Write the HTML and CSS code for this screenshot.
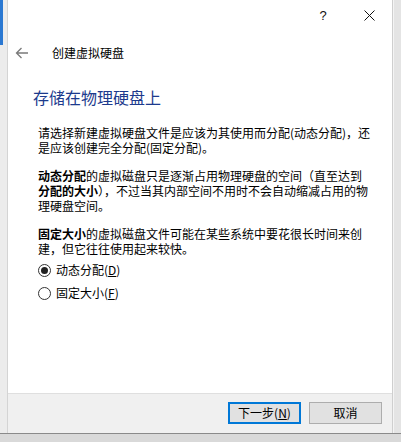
FILE: index.html
```html
<!DOCTYPE html>
<html lang="zh-CN">
<head>
<meta charset="utf-8">
<title>创建虚拟硬盘</title>
<link rel="stylesheet" href="styles.css">
</head>
<body>
<div class="screen">
  <div class="left-strip"><div class="blue-bar"></div></div>
  <div class="dialog">
    <div class="titlebar">
      <div class="cap-btn help">?</div>
      <div class="cap-btn close">
        <svg width="11" height="11" viewBox="0 0 11 11"><path d="M0.5 0.5 L10.5 10.5 M10.5 0.5 L0.5 10.5" stroke="#111" stroke-width="1" fill="none"/></svg>
      </div>
    </div>
    <div class="header">
      <svg class="back" width="14" height="12" viewBox="0 0 14 12"><path d="M13 6 H1.5 M6.5 1 L1.5 6 L6.5 11" stroke="#7a7a7a" stroke-width="1.3" fill="none"/></svg>
      <span class="header-title">创建虚拟硬盘</span>
    </div>
    <div class="content">
      <h1 class="instruction">存储在物理硬盘上</h1>
      <div class="body-text">
        <p>请选择新建虚拟硬盘文件是应该为其使用而分配(动态分配)，还<br>是应该创建完全分配(固定分配)。</p>
        <p><b>动态分配</b>的虚拟磁盘只是逐渐占用物理硬盘的空间（直至达到<br><b>分配的大小</b>），不过当其内部空间不用时不会自动缩减占用的物<br>理硬盘空间。</p>
        <p><b>固定大小</b>的虚拟磁盘文件可能在某些系统中要花很长时间来创<br>建，但它往往使用起来较快。</p>
      </div>
      <div class="radios">
        <label class="radio"><span class="circle checked"></span><span>动态分配(<u>D</u>)</span></label>
        <label class="radio"><span class="circle"></span><span>固定大小(<u>F</u>)</span></label>
      </div>
    </div>
    <div class="footer">
      <div class="btn primary">下一步(<u>N</u>)</div>
      <div class="btn">取消</div>
    </div>
  </div>
  <div class="right-strip"></div>
</div>
<div class="bottom-strip"></div>
</body>
</html>
```
FILE: styles.css
```css
html, body {
  margin: 0;
  padding: 0;
}
body {
  width: 401px;
  height: 442px;
  overflow: hidden;
  background: #f0f0f0;
  font-family: "Noto Sans CJK SC", "Noto Sans", sans-serif;
  font-size: 12px;
  color: #000;
}
.screen {
  display: flex;
  height: 433px;
}
.left-strip {
  width: 7px;
  background: #ececec;
  border-right: 1px solid #d4d4d4;
}
.blue-bar {
  width: 3px;
  height: 45px;
  background: #2a78d2;
}
.dialog {
  flex: 1;
  display: flex;
  flex-direction: column;
  background: #fff;
  border-right: 1px solid #cfcfcf;
}
.right-strip {
  width: 7px;
  background: #e4e4e4;
  border-left: 1px solid #f4f4f4;
}
.titlebar {
  display: flex;
  justify-content: flex-end;
  height: 31px;
}
.cap-btn {
  width: 46px;
  height: 31px;
  display: flex;
  align-items: center;
  justify-content: center;
}
.help {
  font-family: "Liberation Sans", sans-serif;
  font-size: 13px;
  color: #111;
}
.header {
  display: flex;
  align-items: center;
  height: 44px;
  padding-left: 7px;
}
.back {
  margin-right: 23px;
}
.header-title {
  line-height: 16px;
}
.content {
  padding-left: 25px;
}
.instruction {
  margin: 12px 0 0 0;
  font-weight: normal;
  font-size: 16px;
  line-height: 20px;
  color: #1c3a8d;
}
.body-text {
  padding-left: 5px;
  margin-top: 18px;
}
.body-text p {
  margin: 0 0 13px 0;
  line-height: 15px;
  white-space: nowrap;
}
.body-text p:last-child {
  margin-bottom: 0;
}
.body-text b {
  font-weight: bold;
}
.radios {
  padding-left: 5px;
  margin-top: 7px;
  display: flex;
  flex-direction: column;
  gap: 9px;
}
.radio {
  display: flex;
  align-items: center;
  gap: 5px;
  height: 14px;
  line-height: 14px;
}
.circle {
  box-sizing: border-box;
  width: 13px;
  height: 13px;
  border: 1px solid #333;
  border-radius: 50%;
  display: flex;
  align-items: center;
  justify-content: center;
  background: #fff;
}
.circle.checked::after {
  content: "";
  width: 7px;
  height: 7px;
  border-radius: 50%;
  background: #222;
}
.footer {
  margin-top: auto;
  box-sizing: border-box;
  height: 40px;
  border-top: 1px solid #dfdfdf;
  background: #f0f0f0;
  display: flex;
  justify-content: flex-end;
  align-items: flex-start;
  gap: 8px;
  padding: 8px 10px 0 0;
}
.btn {
  box-sizing: border-box;
  width: 73px;
  height: 22px;
  border: 1px solid #adadad;
  background: #e1e1e1;
  display: flex;
  align-items: center;
  justify-content: center;
  line-height: 14px;
}
.btn.primary {
  border: 2px solid #0078d7;
}
.bottom-strip {
  height: 9px;
  background: #d9d9d9;
  border-top: 1px solid #8a8a8a;
  box-sizing: border-box;
}
```
